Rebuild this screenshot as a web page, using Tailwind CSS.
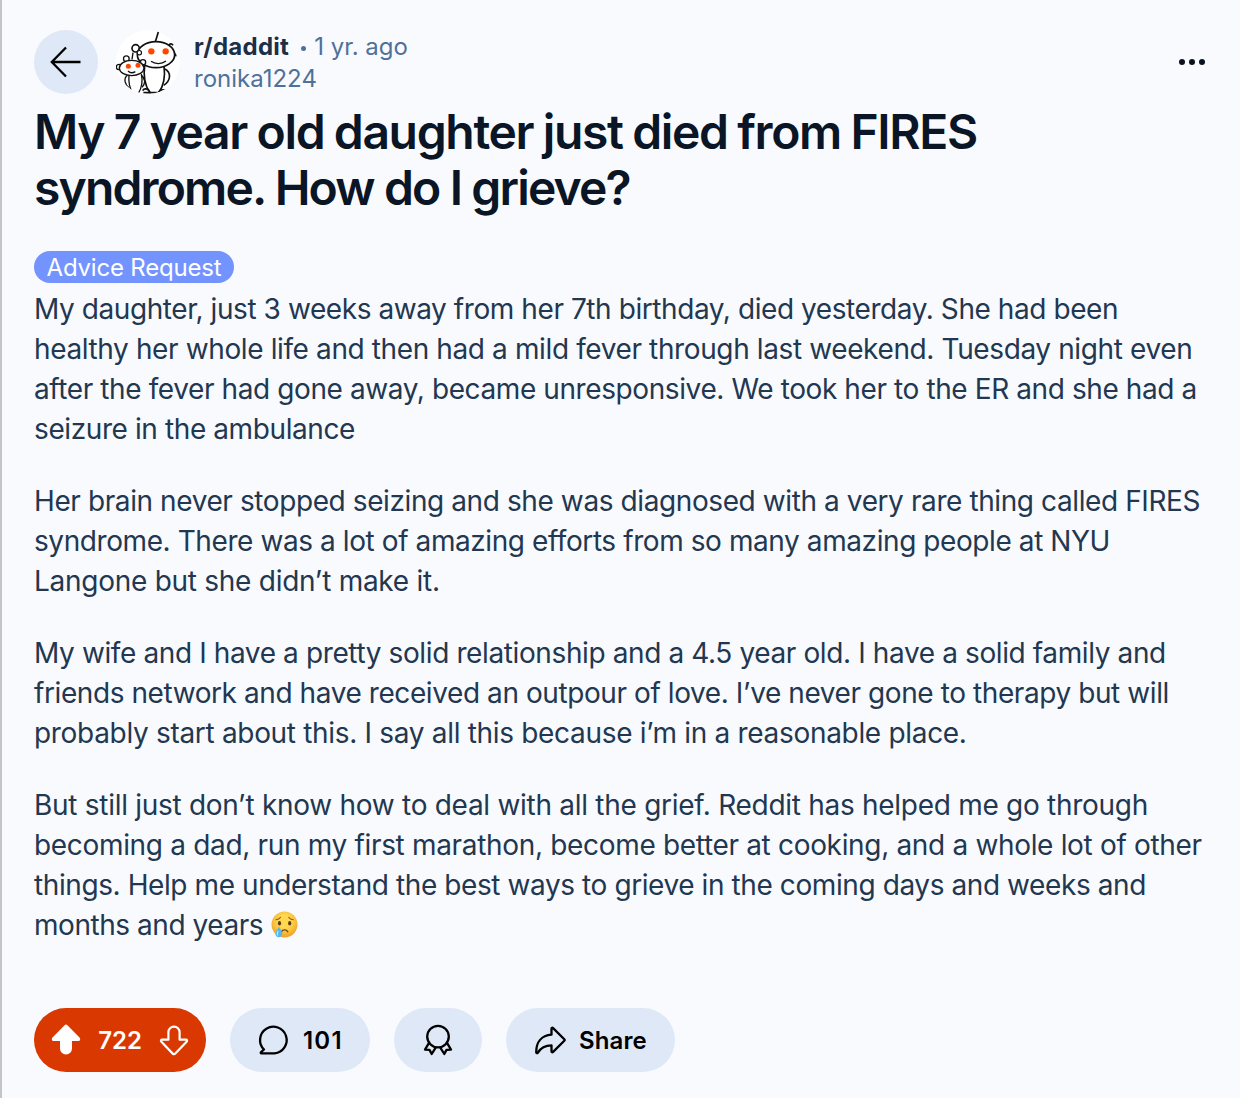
<!DOCTYPE html>
<html lang="en">
<head>
  <meta charset="UTF-8" />
  <meta name="viewport" content="width=device-width, initial-scale=1" />
  <title>r/daddit - My 7 year old daughter just died from FIRES syndrome</title>
  <script src="https://cdn.jsdelivr.net/npm/@tailwindcss/browser@4"></script>
</head>
<body class="bg-[#f9fafe] font-['Inter',sans-serif] text-[#223750]">
  <main class="h-[1098px] w-[1240px] overflow-hidden border-l-2 border-[#c3c4ca] pt-[30px] pr-[32px] pl-[32px]">

    <header class="flex h-16 items-center">
      <button class="flex size-16 items-center justify-center rounded-full bg-[#dfe8f6]" aria-label="Back">
        <svg class="size-16" viewBox="0 0 64 64" fill="none" stroke="#000" stroke-width="2.3">
          <path d="M46.500 32H18M32 17.500 17.800 32 32 46.500" />
        </svg>
      </button>

      <!-- subreddit avatar -->
      <svg class="ml-[18px] size-16" viewBox="18 18 192 192" fill="none" stroke="#111" stroke-width="5">
        <clipPath id="avatar"><circle cx="114" cy="114" r="96" /></clipPath>
        <circle cx="114" cy="114" r="96" fill="#fff" stroke="none" />
        <path d="M136 53 145 24" />
        <circle cx="77" cy="73" r="11" fill="#fff" />
        <path d="M176 64c3-6 10-6 13 0M191 90c5-1 7 3 6 7" />
        <g clip-path="url(#avatar)">
          <path d="M163 134c22 10 20 36-2 50" />
          <path d="M104 124c-4 30 0 60 16 82h26c16-22 20-50 16-80" fill="#fff" />
        </g>
        <ellipse cx="138" cy="92" rx="56" ry="39" fill="#fff" />
        <circle cx="88" cy="86" r="6.500" fill="#fff" stroke-width="3.500" />
        <circle cx="124" cy="82" r="9.500" fill="#ff4500" stroke="none" />
        <circle cx="167" cy="82" r="9.500" fill="#ff4500" stroke="none" />
        <path d="M123 112c12 9 32 9 45-1" stroke-width="4" />
        <path d="M66 106 69 86" stroke-width="4" />
        <circle cx="49" cy="104" r="8.500" fill="#fff" stroke-width="4" />
        <circle cx="99" cy="115" r="8" fill="#fff" stroke-width="4" />
        <circle cx="27" cy="129" r="8" fill="#fff" stroke-width="4" />
        <g clip-path="url(#avatar)">
          <path d="M52 154c-12 10-8 28 6 38M94 154c14 10 12 26 2 36" stroke-width="4" />
          <path d="M57 152c-2 22 2 42 12 56h16c10-16 14-36 9-58" fill="#fff" stroke-width="4" />
          <path d="M98 200c4-8 16-8 22 4M100 206h22M146 204c6-8 16-8 22-4" />
        </g>
        <ellipse cx="65" cy="132" rx="37" ry="23" fill="#fff" stroke-width="4" />
        <circle cx="55" cy="127" r="7.500" fill="#ff4500" stroke="none" />
        <circle cx="84" cy="124" r="7.500" fill="#ff4500" stroke="none" />
        <path d="M54 141c6 6 15 6 22 2" stroke-width="4" />
      </svg>

      <div class="mt-[2px] ml-[14px] flex flex-col text-2xl leading-8 text-[#4f7199]">
        <div class="flex items-center whitespace-nowrap">
          <span class="font-bold tracking-[0.27px] text-[#1c2f49]">r/daddit</span>
          <span class="mt-[3px] mr-[8px] ml-[12px] size-[5px] rounded-full bg-[#4f7199]"></span>
          <span>1 yr. ago</span>
        </div>
        <span>ronika1224</span>
      </div>

      <button class="mr-[3px] ml-auto flex gap-[3.4px]" aria-label="More">
        <span class="size-[6.4px] rounded-full bg-[#0b1320]"></span>
        <span class="size-[6.4px] rounded-full bg-[#0b1320]"></span>
        <span class="size-[6.4px] rounded-full bg-[#0b1320]"></span>
      </button>
    </header>

    <h1 class="mt-[10px] text-5xl leading-[56px] font-semibold whitespace-nowrap text-[#0a1626]">
      <span class="tracking-[-1.35px] [word-spacing:-1.2px]">My 7 year old daughter just died from FIRES</span><br />
      <span class="tracking-[-1.85px]">syndrome. How do I grieve?</span>
    </h1>

    <div class="mt-[35px] flex h-8 w-[200px] items-center justify-center rounded-full bg-[#7393ff] pt-[2px] text-2xl tracking-[-0.2px] whitespace-nowrap text-white">Advice Request</div>

    <article class="mt-[6px] flex flex-col gap-8 text-[28px] leading-10 whitespace-nowrap">
      <p>
        <span class="tracking-[-0.427px]">My daughter, just 3 weeks away from her 7th birthday, died yesterday. She had been</span><br />
        <span class="tracking-[-0.382px]">healthy her whole life and then had a mild fever through last weekend. Tuesday night even</span><br />
        <span class="tracking-[-0.4px]">after the fever had gone away, became unresponsive. We took her to the ER and she had a</span><br />
        <span class="tracking-[-0.4px]">seizure in the ambulance</span>
      </p>
      <p>
        <span class="tracking-[-0.404px]">Her brain never stopped seizing and she was diagnosed with a very rare thing called FIRES</span><br />
        <span class="tracking-[-0.415px]">syndrome. There was a lot of amazing efforts from so many amazing people at NYU</span><br />
        <span class="tracking-[-0.27px]">Langone but she didn’t make it.</span>
      </p>
      <p>
        <span class="tracking-[-0.385px]">My wife and I have a pretty solid relationship and a 4.5 year old. I have a solid family and</span><br />
        <span class="tracking-[-0.416px]">friends network and have received an outpour of love. I’ve never gone to therapy but will</span><br />
        <span class="tracking-[-0.316px]">probably start about this. I say all this because i’m in a reasonable place.</span>
      </p>
      <p>
        <span class="tracking-[-0.282px]">But still just don’t know how to deal with all the grief. Reddit has helped me go through</span><br />
        <span class="tracking-[-0.326px]">becoming a dad, run my first marathon, become better at cooking, and a whole lot of other</span><br />
        <span class="tracking-[-0.41px]">things. Help me understand the best ways to grieve in the coming days and weeks and</span><br />
        <span class="tracking-[-0.45px]">months and years</span>
        <!-- crying face -->
        <svg class="inline-block size-[27px] align-[-3px]" viewBox="0 0 27 27" fill="none">
          <defs>
            <radialGradient id="face" cx="50%" cy="38%" r="62%">
              <stop offset="0.4" stop-color="#ffd84f" />
              <stop offset="1" stop-color="#f0a028" />
            </radialGradient>
          </defs>
          <circle cx="13.500" cy="13.500" r="13" fill="url(#face)" />
          <ellipse cx="8.500" cy="12.300" rx="1.600" ry="2.200" fill="#5f3b12" />
          <ellipse cx="18.700" cy="12.300" rx="1.600" ry="2.200" fill="#5f3b12" />
          <path d="M5 8.800c2-.2 3.500-1 4.500-2.500M22.200 8.800c-2-.2-3.500-1-4.500-2.500" stroke="#8a5a1c" stroke-width="1.100" stroke-linecap="round" />
          <path d="M10.500 20.700c1.200-2.400 5-2.400 6.200 0" stroke="#6b4212" stroke-width="1.400" stroke-linecap="round" />
          <path d="M8 15.500c1 2.600 3.300 4.700 3.300 7 0 2.300-1.600 3.800-3.500 3.800s-3.400-1.500-3.400-3.600c0-2.400 2.600-4.600 3.600-7.200Z" fill="#55b7ee" />
          <path d="M7 20.500c-.8 1.200-1.200 2.300-.6 3.400" stroke="#c8eeff" stroke-width="1.200" stroke-linecap="round" />
        </svg>
      </p>
    </article>

    <footer class="mt-[63px] flex gap-6 text-2xl font-semibold text-black">
      <div class="flex h-16 w-[172px] items-center rounded-full bg-[#d93900] pl-4 text-white">
        <svg class="size-8" viewBox="0 0 32 32" fill="#fff">
          <path d="M14.600 1.300a2 2 0 0 1 2.800 0L29.500 13.600c1.300 1.400.6 3.400-1.200 3.400H22v7.500a6 6 0 0 1-12 0V17H3.700c-1.800 0-2.500-2-1.200-3.400Z" />
        </svg>
        <span class="ml-4 w-[44px] pt-[2px] text-center">722</span>
        <svg class="ml-4 size-8" viewBox="0 0 32 32" fill="none" stroke="#fff" stroke-width="2.200" stroke-linejoin="round">
          <path d="M16 30.200c-.6 0-.9-.2-1.300-.6L3.400 17.800c-.8-.9-.5-2.100.7-2.100h6.300V8.200a5.600 5.600 0 0 1 11.200 0v7.500h6.300c1.200 0 1.500 1.200.7 2.100L17.300 29.600c-.4.400-.7.600-1.300.6Z" />
        </svg>
      </div>

      <button class="flex h-16 w-[140px] items-center rounded-full bg-[#dfe8f6] pl-7">
        <svg class="size-8" viewBox="0 0 32 32" fill="none" stroke="#000" stroke-width="2.300" stroke-linejoin="round">
          <path d="M16.500 29.300H3.400c-.7 0-.9-.7-.4-1.100l3-2.700A13.300 13.300 0 1 1 16.500 29.300Z" />
        </svg>
        <span class="ml-[13px] pt-[2px] tracking-[1.2px]">101</span>
      </button>

      <button class="flex h-16 w-[88px] items-center justify-center rounded-full bg-[#dfe8f6]" aria-label="Award">
        <svg class="size-8" viewBox="0 0 32 32" fill="none" stroke="#000" stroke-width="2.300" stroke-linejoin="round">
          <circle cx="16" cy="12.600" r="10.800" />
          <path d="M7 18.800 3 25.600l4.500.3L9.700 30l4.300-6.800M25 18.800l4 6.800-4.500.3-2.200 4.100-4.300-6.800" />
        </svg>
      </button>

      <button class="flex h-16 w-[169px] items-center rounded-full bg-[#dfe8f6] pl-7">
        <svg class="size-8" viewBox="0 0 32 32" fill="none" stroke="#000" stroke-width="2.300" stroke-linejoin="round">
          <path d="M17.500 4.700c0-1 .9-1.300 1.600-.6L30.300 15.300c.4.400.4 1 0 1.400L19.100 27.900c-.7.700-1.600.4-1.600-.6v-6c-6 0-10.500 2-13.600 7.300-.6 1-1.700.7-1.700-.5C2.200 18 7.500 11.500 17.500 10.700Z" />
        </svg>
        <span class="ml-[13px] pt-[2px] tracking-[0.1px]">Share</span>
      </button>
    </footer>
  </main>
</body>
</html>
